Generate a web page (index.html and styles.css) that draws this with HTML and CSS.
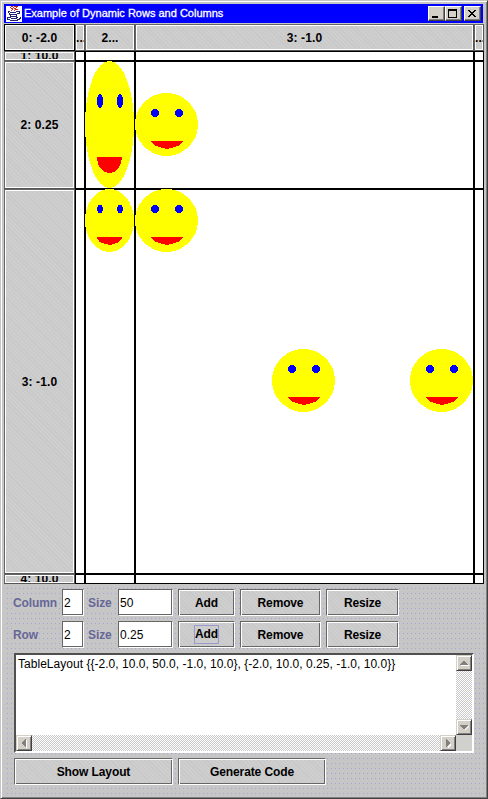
FILE: index.html
```html
<!DOCTYPE html>
<html lang="en">
<head>
<meta charset="utf-8">
<title>Example of Dynamic Rows and Columns</title>
<link rel="stylesheet" href="styles.css">
</head>
<body>
<div class="window">
  <header class="titlebar">
    <svg class="logo" width="16" height="16" viewBox="0 0 16 16" shape-rendering="crispEdges">
      <path fill="#fff" d="M0 0h16v16H0z"/>
      <path fill="none" stroke="#e01818" d="M5 .5h2M8 .5h4M4 1.5h1M7 1.5h1M10 1.5h1M5 2.5h2M8 2.5h2M6 3.5h1M9 3.5h3M5 4.5h1M8 4.5h1"/>
      <path fill="none" stroke="#202070" d="M2 5.5h2M10 5.5h4M2 6.5h1M4 6.5h6M13 6.5h1M3 7.5h1M11 7.5h3M3 8.5h8M4 9.5h1M10 9.5h1M4 10.5h7M1 11.5h4M10 11.5h2M14 11.5h1M1 12.5h1M5 12.5h6M13 12.5h2M1 13.5h3M11 13.5h3M4 14.5h8"/>
    </svg>
    <h1>Example of Dynamic Rows and Columns</h1>
    <div class="controls">
      <button class="ctl"><svg width="14" height="12" shape-rendering="crispEdges"><path d="M3 8h6v2H3z"/></svg></button>
      <button class="ctl"><svg width="14" height="12" shape-rendering="crispEdges"><path fill-rule="evenodd" d="M2 1h9v9H2zM3 3v6h7V3z"/></svg></button>
      <button class="ctl last"><svg width="14" height="12" shape-rendering="crispEdges"><path d="M3 2h2v1h1v1h2V3h1V2h2v1h-1v1H9v1H8v1h1v1h1v1h1v1H9V8H8V7H6v1H5v1H3V8h1V7h1V6h1V5H5V4H4V3H3z"/></svg></button>
    </div>
  </header>

  <main class="table">
    <button class="cell current">0: -2.0</button>
    <button class="cell">...</button>
    <button class="cell">2...</button>
    <button class="cell">3: -1.0</button>
    <button class="cell">...</button>
    <button class="cell"><span>1: 10.0</span></button>
    <svg class="canvas" width="409" height="533" viewBox="75 51 409 533" shape-rendering="crispEdges">
      <defs>
        <g id="face">
          <ellipse cx="31.5" cy="31.5" rx="31.5" ry="31.5" fill="#ff0"/>
          <circle cx="20" cy="20" r="4" fill="#00f"/>
          <circle cx="44" cy="20" r="4" fill="#00f"/>
          <path d="M16 48h32c-1 4-7 6-12 7l-4 1-4-1c-5-1-11-3-12-7z" fill="#f00"/>
        </g>
      </defs>
      <path fill="#fff" d="M75 51h409v533H75z"/>
      <path fill="none" stroke="#000" d="M75.5 51.5h408v532h-408z"/>
      <path fill="#000" d="M84 51h2v533h-2zM134 51h2v533h-2zM473 51h2v533h-2zM75 60h409v2H75zM75 188h409v2H75zM75 573h409v2H75z"/>
      <ellipse cx="109.5" cy="124.5" rx="24.5" ry="63.5" fill="#ff0"/>
      <ellipse cx="100" cy="101" rx="3" ry="7" fill="#00f"/>
      <ellipse cx="120" cy="101" rx="3" ry="7" fill="#00f"/>
      <path d="M97 157h25c0 9-5 16-12.500 16S97 166 97 157z" fill="#f00"/>
      <ellipse cx="109.500" cy="220.500" rx="24.500" ry="31.500" fill="#ff0"/>
      <ellipse cx="100" cy="209" rx="3" ry="4" fill="#00f"/>
      <ellipse cx="120" cy="209" rx="3" ry="4" fill="#00f"/>
      <path d="M97 237h25c0 4-4 6-9 7l-3 1-4-1c-5-1-9-3-9-7z" fill="#f00"/>
      <use href="#face" x="135" y="93"/>
      <use href="#face" x="135" y="189"/>
      <use href="#face" x="272" y="349"/>
      <use href="#face" x="410" y="349"/>
    </svg>
    <button class="cell">2: 0.25</button>
    <button class="cell">3: -1.0</button>
    <button class="cell"><span>4: 10.0</span></button>
  </main>

  <section class="panel">
    <form class="form">
      <label>Column</label><input value="2"><label>Size</label><input value="50">
      <button class="btn" type="button">Add</button><button class="btn" type="button">Remove</button><button class="btn" type="button">Resize</button>
      <label>Row</label><input value="2"><label>Size</label><input value="0.25">
      <button class="btn" type="button"><span class="focus">Add</span></button><button class="btn" type="button">Remove</button><button class="btn" type="button">Resize</button>
    </form>
    <div class="output">
      <div class="text">TableLayout {{-2.0, 10.0, 50.0, -1.0, 10.0}, {-2.0, 10.0, 0.25, -1.0, 10.0}}</div>
      <div class="scroll vertical">
        <i class="arrow"><svg width="12" height="12" shape-rendering="crispEdges"><path class="hi" d="M3 8h8v1H3z"/><path d="M2 8V7h1V6h1V5h1V4h2v1h1v1h1v1h1v1z"/></svg></i>
        <i class="arrow"><svg width="12" height="12" shape-rendering="crispEdges"><path class="hi" d="M6 9l5-5v1L7 9z"/><path d="M2 4h8v1H9v1H8v1H7v1H5V7H4V6H3V5H2z"/></svg></i>
      </div>
      <div class="scroll horizontal">
        <i class="arrow"><svg width="12" height="12" shape-rendering="crispEdges"><path class="hi" d="M8 3h1v8H8z"/><path d="M8 2H7v1H6v1H5v1H4v2h1v1h1v1h1v1h1z"/></svg></i>
        <i class="arrow"><svg width="12" height="12" shape-rendering="crispEdges"><path class="hi" d="M5 10l4-4v2l-3 3z"/><path d="M4 2h1v1h1v1h1v1h1v2H7v1H6v1H5v1H4z"/></svg></i>
      </div>
      <div class="corner"></div>
    </div>
    <div class="actions"><button class="btn">Show Layout</button><button class="btn">Generate Code</button></div>
  </section>
</div>
</body>
</html>
```

FILE: styles.css
```css
* { box-sizing: border-box; }
body { margin: 0; font: 12px "Liberation Sans", Arial, sans-serif; }
button, input, h1 { margin: 0; padding: 0; font: inherit; color: #000; border-radius: 0; }

.window {
  width: 488px; height: 799px;
  display: flex; flex-direction: column;
  padding: 2px 2px 1px 2px;
  background: #c6c6c6;
  border: 1px solid; border-color: #c6c6c6 #404040 #404040 #c6c6c6;
  box-shadow: inset 1px 1px #fff, inset -1px -1px #808080;
}
.titlebar {
  flex: none; display: flex; align-items: center;
  height: 19px; margin: 1px 2px 0 1px; padding: 0 2px;
  background: #00f;
}
.titlebar h1 { margin-left: 2px; color: #fff; font-size: 11px; font-weight: 400; line-height: 19px; white-space: nowrap; -webkit-text-stroke: .3px #fff; letter-spacing: 0; }
.controls { display: flex; margin-left: auto; }
.ctl {
  width: 17px; height: 15px; display: block;
  border: 1px solid; border-color: #fff #404040 #404040 #fff;
  background: #d4d0c8; box-shadow: inset -1px -1px #808080;
}
.ctl svg { display: block; }
.last { margin-left: 2px; }

.table {
  flex: none; display: grid;
  width: 480px; height: 560px; margin: 1px 0 0 1px;
  grid-template-columns: 71px 10px 50px 339px 10px;
  grid-template-rows: 27px 10px 128px 385px 10px;
}
.canvas { grid-column: 2 / 6; grid-row: 2 / 6; display: block; }
.cell, .btn {
  min-width: 0; overflow: hidden; white-space: nowrap;
  font-weight: 700; text-align: center;
  background: repeating-linear-gradient(45deg, #c8c8c8 0 1px, #cecece 1px 3px);
}
.cell {
  border: 1px solid; border-color: #666 #555 #555 #666;
  box-shadow: inset 1px 1px #fff, inset -1px -1px #fff;
  letter-spacing: .1px;
}
.current { border-color: #000; }
.cell span { display: block; height: 6px; line-height: 7px; overflow: hidden; }

.panel {
  flex: 1; margin: 0 1px 0 1px; padding: 5px 9px 0 10px;
  background:
    conic-gradient(from 270deg at 1px 1px, #a4a4dc 90deg, transparent 0) 3px 4px / 4px 5px,
    #c6c6c6;
}
.form {
  display: grid; align-items: center;
  grid-template-columns: 49px 26px 30px 60px 62px 86px 73px;
  grid-template-rows: 27px 27px; row-gap: 5px; margin-left: -1px;
}
.form label { color: #666699; font-weight: 700; background: #c6c6c6; justify-self: start; letter-spacing: -.1px; }
.form input {
  width: 22px; height: 27px; padding: 0 1px;
  background: #fff; outline: 0;
  border: 1px solid; border-color: #666 #fff #fff #666;
  box-shadow: inset -1px -1px #666;
}
.form input:nth-of-type(even) { width: 55px; }
.btn {
  height: 27px; border: 1px solid; border-color: #666 #fff #fff #666;
  box-shadow: inset 1px 1px #fff, inset -1px -1px #666;
}
.form .btn { width: 57px; letter-spacing: -.15px; }
.form .btn:nth-of-type(3n + 2) { width: 81px; }
.form .btn:nth-of-type(3n) { width: 73px; }
.focus { display: inline-block; outline: 1px solid #9999cc; line-height: 17px; vertical-align: middle; }

.output {
  display: grid; width: 460px; height: 100px; margin-top: 5px;
  grid-template: 80px 16px / 440px 16px;
  border: 2px solid; border-color: #505050 #fff #fff #505050;
  background: #fff;
}
.text { padding: 1px 2px; line-height: 16px; white-space: nowrap; letter-spacing: .03px; }
.scroll { display: flex; justify-content: space-between; background: repeating-conic-gradient(#fff 0 25%, #cacaca 0 50%) 0 0 / 2px 2px; }
.vertical { flex-direction: column; }
.arrow {
  width: 16px; height: 16px; padding: 1px;
  border: 1px solid; border-color: #d4d0c8 #404040 #404040 #d4d0c8;
  box-shadow: inset 1px 1px #fff, inset -1px -1px #808080; background: #d4d0c8;
}
.arrow svg { display: block; fill: #808080; }
.arrow .hi { fill: #fff; }
.corner { background: #d0d0cc; }

.actions { display: flex; gap: 5px; margin-top: 5px; }
.actions .btn { width: 159px; height: 27px; letter-spacing: -.1px; }
.actions .btn + .btn { width: 148px; }
```
